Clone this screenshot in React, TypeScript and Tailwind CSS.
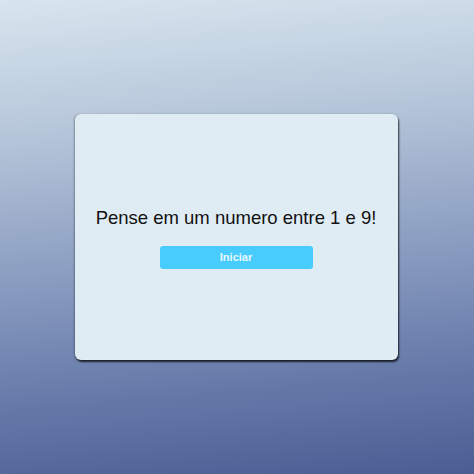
import React from "react";

export default function App() {
  return (
    <div
      className="w-[474px] h-[474px] flex items-center justify-center bg-[linear-gradient(175deg,#d8e5ef_0%,#b8c8db_25%,#8a9cc0_55%,#6478a8_80%,#4a5e94_100%)]"
      style={{ fontFamily: '"Liberation Sans", Arial, sans-serif' }}
    >
      <div className="mr-[2px] w-[323px] h-[246px] rounded-[6px] bg-[#e0ecf4] shadow-[1px_2px_2px_rgba(0,0,0,0.75),-1px_0px_2px_rgba(0,0,0,0.25)] flex flex-col items-center justify-center">
        <p className="text-[18.5px] leading-[23px] text-[#111]">Pense em um numero entre 1 e 9!</p>
        <button className="mt-[17px] w-[153px] h-[23px] rounded-[3px] bg-[#48cbfd] text-[11px] font-bold text-[#eaf8ff]">
          Iniciar
        </button>
      </div>
    </div>
  );
}
